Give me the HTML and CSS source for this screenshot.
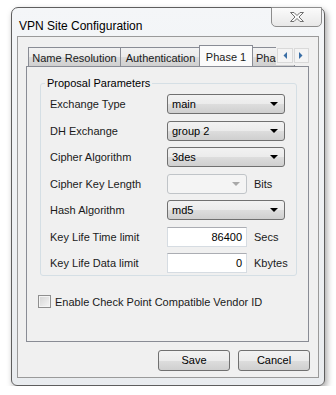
FILE: index.html
```html
<!DOCTYPE html>
<html lang="en">
<head>
    <meta charset="UTF-8">
    <title>VPN Site Configuration</title>
    <link rel="stylesheet" href="styles.css">
</head>
<body>
    <div class="window">
        <div class="titlebar">
            <span class="title">VPN Site Configuration</span>
            <div class="close-button">
                <svg width="16" height="12" viewBox="0 0 16 12">
                    <path d="M1.5 1.5 H5 L8 4.5 L11 1.5 H14.5 L10 6 L14.5 10.5 H11 L8 7.5 L5 10.5 H1.5 L6 6 Z"
                          fill="#fafafa" stroke="#707070" stroke-width="1" stroke-linejoin="round"/>
                </svg>
            </div>
        </div>

        <div class="client">
            <div class="tabs">
                <div class="tabstrip">
                    <div class="tab tab-name">Name Resolution</div>
                    <div class="tab tab-auth">Authentication</div>
                    <div class="tab tab-active">Phase 1</div>
                    <div class="tab tab-more">Phase 2</div>
                    <div class="tab-scroll">
                        <span class="scroll-btn">
                            <svg width="4" height="7" viewBox="0 0 4 7"><path d="M4 0 V7 L0.5 3.5 Z" fill="#3a6ea5"/></svg>
                        </span>
                        <span class="scroll-btn">
                            <svg width="4" height="7" viewBox="0 0 4 7"><path d="M0 0 V7 L3.5 3.5 Z" fill="#3a6ea5"/></svg>
                        </span>
                    </div>
                </div>

                <div class="tabpanel">
                    <div class="group">
                        <div class="legend">Proposal Parameters</div>
                        <div class="rows">
                            <div class="row">
                                <span class="label">Exchange Type</span>
                                <div class="combo">main<i class="arrow"></i></div>
                            </div>
                            <div class="row">
                                <span class="label">DH Exchange</span>
                                <div class="combo">group 2<i class="arrow"></i></div>
                            </div>
                            <div class="row">
                                <span class="label">Cipher Algorithm</span>
                                <div class="combo">3des<i class="arrow"></i></div>
                            </div>
                            <div class="row">
                                <span class="label">Cipher Key Length</span>
                                <div class="combo combo-disabled"><i class="arrow"></i></div>
                                <span class="unit">Bits</span>
                            </div>
                            <div class="row">
                                <span class="label">Hash Algorithm</span>
                                <div class="combo">md5<i class="arrow"></i></div>
                            </div>
                            <div class="row">
                                <span class="label">Key Life Time limit</span>
                                <div class="textbox">86400</div>
                                <span class="unit">Secs</span>
                            </div>
                            <div class="row">
                                <span class="label">Key Life Data limit</span>
                                <div class="textbox">0</div>
                                <span class="unit">Kbytes</span>
                            </div>
                        </div>
                    </div>

                    <div class="check">
                        <span class="checkbox"></span>
                        <span>Enable Check Point Compatible Vendor ID</span>
                    </div>
                </div>
            </div>

            <div class="button-container">
                <div class="button">Save</div>
                <div class="button">Cancel</div>
            </div>
        </div>
    </div>
</body>
</html>
```

FILE: styles.css
```css
:root {
    --face-color: #f0f0f0;
    --tab-border: #898c95;
    --control-border: #707070;
    --group-border: #d5dfe5;
}

body {
    margin: 0;
    background: #ffffff;
    font-family: 'Liberation Sans', Arial, sans-serif;
    font-size: 11px;
    color: #1a1a1a;
}

.window {
    box-sizing: border-box;
    width: 314px;
    height: 379px;
    margin: 7px 0 0 11px;
    padding: 0 5px 7px 5px;
    border: 1px solid #5e5e5e;
    border-radius: 7px 7px 6px 6px;
    background: linear-gradient(#f4f6f8, #e9ecef);
    box-shadow: 2px 3px 6px rgba(0,0,0,0.35);
}

.titlebar {
    display: flex;
    justify-content: space-between;
    height: 28px;
}

.title {
    padding: 11px 0 0 2px;
    font-size: 12px;
    line-height: 14px;
    color: #000;
}

.close-button {
    display: flex;
    align-items: center;
    justify-content: center;
    width: 49px;
    height: 18px;
    margin: -1px -3px 0 0;
    border: 1px solid #8d8d8d;
    border-radius: 0 0 5px 5px;
    background: linear-gradient(#fbfbfb, #e8e8e8);
}

.client {
    box-sizing: border-box;
    width: 302px;
    height: 342px;
    padding: 8px 9px 0 8px;
    border: 1px solid #9a9a9a;
    background: var(--face-color);
}

/* tabs */

.tabstrip {
    position: relative;
    display: flex;
    align-items: flex-end;
    height: 21px;
    padding-left: 2px;
    overflow: hidden;
}

.tab {
    box-sizing: border-box;
    flex: none;
    height: 19px;
    padding-top: 3px;
    border: 1px solid var(--tab-border);
    border-bottom: none;
    background: linear-gradient(#f2f2f2 0%, #ebebeb 50%, #dddddd 51%, #cfcfcf 100%);
    text-align: center;
    line-height: 14px;
}

.tab-name { width: 93px; }
.tab-auth { width: 81px; margin-left: -1px; }
.tab-more { width: 44px; margin-left: -2px; text-align: left; padding-left: 4px; }

.tab-active {
    position: relative;
    z-index: 1;
    width: 54px;
    height: 22px;
    margin: 0 0 -1px -2px;
    padding-top: 4px;
    background: #fbfbfb;
}

.tab-scroll {
    position: absolute;
    top: 0;
    right: 0;
    z-index: 2;
    display: flex;
    gap: 1px;
    width: 33px;
    height: 20px;
    padding: 3px 0 0 1px;
    box-sizing: border-box;
    background: var(--face-color);
}

.scroll-btn {
    display: flex;
    align-items: center;
    justify-content: center;
    width: 14px;
    height: 13px;
    border: 1px solid #d9d9d9;
    background: #f4f4f4;
}

.tabpanel {
    box-sizing: border-box;
    height: 276px;
    padding: 16px 11px 0 13px;
    border: 1px solid var(--tab-border);
    background: var(--face-color);
}

/* group box */

.group {
    box-sizing: border-box;
    height: 193px;
    padding: 0 0 1px 0;
    border: 1px solid var(--group-border);
    border-radius: 3px;
}

.legend {
    width: fit-content;
    margin: -7px 0 0 4px;
    padding: 0 2px;
    background: var(--face-color);
    line-height: 13px;
    color: #000;
}

.rows {
    display: flex;
    flex-direction: column;
    gap: 6.5px;
    margin-top: 4px;
    padding-left: 9px;
}

.row {
    display: flex;
    align-items: center;
    height: 20px;
}

.label {
    width: 117px;
    flex: none;
}

.combo {
    position: relative;
    box-sizing: border-box;
    width: 118px;
    height: 20px;
    padding-left: 4px;
    border: 1px solid var(--control-border);
    border-radius: 3px;
    background: linear-gradient(#f2f2f2 0%, #ebebeb 50%, #dddddd 51%, #cfcfcf 100%);
    line-height: 18px;
    color: #000;
}

.arrow {
    position: absolute;
    top: 7px;
    right: 6px;
    width: 0;
    height: 0;
    border-left: 4px solid transparent;
    border-right: 4px solid transparent;
    border-top: 4px solid #000;
}

.combo-disabled {
    width: 80px;
    border-color: #c0c4c8;
    background: #f4f4f4;
}

.combo-disabled .arrow {
    border-top-color: #a8a8a8;
}

.textbox {
    box-sizing: border-box;
    width: 80px;
    height: 20px;
    padding-right: 4px;
    border: 1px solid #d6dce2;
    border-top-color: #abadb3;
    background: #ffffff;
    text-align: right;
    line-height: 18px;
    color: #000;
}

.unit {
    margin-left: 7px;
}

/* checkbox */

.check {
    display: flex;
    align-items: center;
    gap: 4px;
    margin: 19px 0 0 -2px;
}

.checkbox {
    box-sizing: border-box;
    width: 13px;
    height: 13px;
    border: 1px solid #8f8f8f;
    background: linear-gradient(135deg, #d4d4d4, #f6f6f6);
    box-shadow: inset 0 0 0 1px #f4f4f4;
}

/* dialog buttons */

.button-container {
    display: flex;
    justify-content: flex-end;
    gap: 8px;
    margin: 8px -1px 0 0;
}

.button {
    box-sizing: border-box;
    width: 72px;
    height: 21px;
    border: 1px solid var(--control-border);
    border-radius: 3px;
    background: linear-gradient(#f2f2f2 0%, #ebebeb 50%, #dddddd 51%, #cfcfcf 100%);
    text-align: center;
    line-height: 19px;
    color: #000;
}
```
